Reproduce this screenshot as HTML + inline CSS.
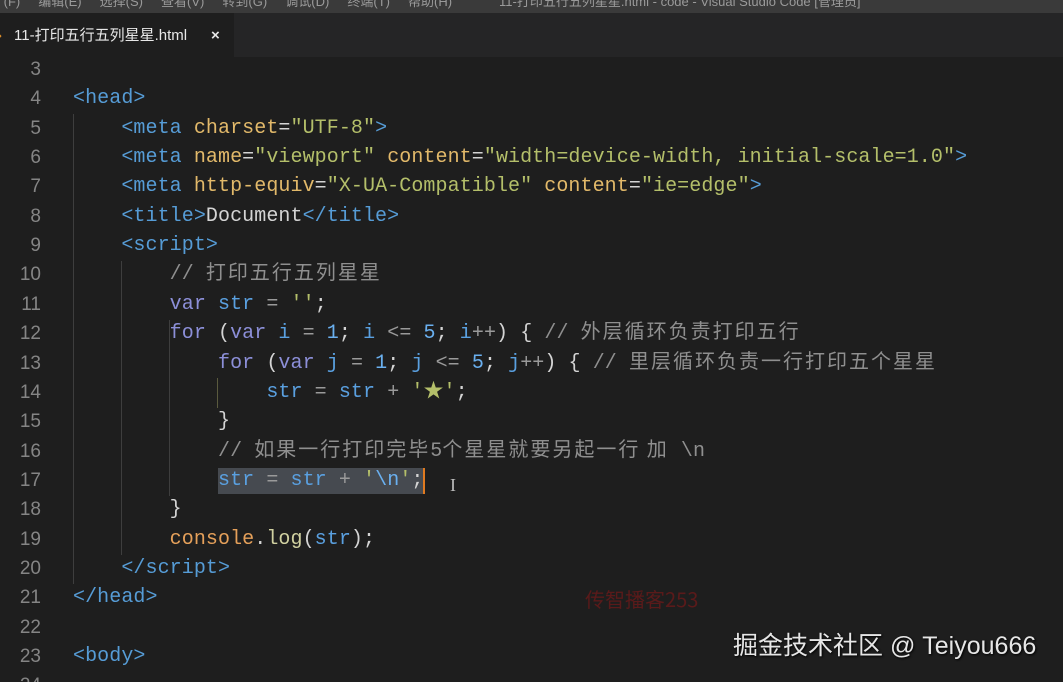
<!DOCTYPE html>
<html><head><meta charset="utf-8"><style>
html,body{margin:0;padding:0;width:1063px;height:682px;overflow:hidden;background:#1e1e1e;position:relative}
.menu{position:absolute;left:0;top:0;width:1063px;height:13px;background:#3a3a3a;overflow:hidden;color:#9a9a9a;font:13px "Liberation Sans","Noto Sans CJK SC",sans-serif;line-height:4px;white-space:nowrap}
.tabbar{position:absolute;left:0;top:13px;width:1063px;height:44px;background:#252526}
.tab{position:absolute;left:0;top:0;width:234px;height:44px;background:#1e1e1e;color:#e8e8e8;font:15px "Liberation Sans","Noto Sans CJK SC",sans-serif;line-height:46px;white-space:nowrap}
.ed{position:absolute;left:0;top:55px;width:1063px}
.ln{position:absolute;left:0;width:41px;text-align:right;color:#858585;font:19px "Liberation Sans",sans-serif;height:29.35px;line-height:29.35px}
.l{position:absolute;left:73px;height:29.35px;font:20px "Liberation Mono","Noto Sans CJK SC",monospace;line-height:29.35px;white-space:pre;color:#d4d4d4;letter-spacing:0.08px}
.t{color:#569cd6}.a{color:#e2b96a}.s{color:#b4bf6a}.k{color:#8c8fd8}.v{color:#5aa0e0}.n{color:#6ab0f0}.c{color:#8f8f8f}.o{color:#9a9a9a}.p{color:#d4d4d4}
.cj{font-family:"Noto Sans CJK SC",sans-serif;letter-spacing:2px;font-size:20px;line-height:1}
.g{position:absolute;width:1px;background:#3e3e3e}
</style></head><body>
<div class="menu">&nbsp;(F)&nbsp;&nbsp;&nbsp;&nbsp;&nbsp;编辑(E)&nbsp;&nbsp;&nbsp;&nbsp;&nbsp;选择(S)&nbsp;&nbsp;&nbsp;&nbsp;&nbsp;查看(V)&nbsp;&nbsp;&nbsp;&nbsp;&nbsp;转到(G)&nbsp;&nbsp;&nbsp;&nbsp;&nbsp;调试(D)&nbsp;&nbsp;&nbsp;&nbsp;&nbsp;终端(T)&nbsp;&nbsp;&nbsp;&nbsp;&nbsp;帮助(H)&nbsp;&nbsp;&nbsp;&nbsp;&nbsp;&nbsp;&nbsp;&nbsp;&nbsp;&nbsp;&nbsp;&nbsp;&nbsp;11-打印五行五列星星.html - code - Visual Studio Code [管理员]</div>
<div class="tabbar"><div class="tab"><span style="color:#e0902a;position:absolute;left:-3px">›</span><span style="position:absolute;left:14px">11-打印五行五列星星.html</span><span style="position:absolute;left:211px;font-weight:bold">×</span></div></div>
<div class="g" style="left:73px;top:114px;height:470px"></div>
<div class="g" style="left:121px;top:261px;height:294px"></div>
<div class="g" style="left:169px;top:320px;height:176px"></div>
<div class="g" style="left:217px;top:378px;height:30px;background:#5a5a3e"></div>
<div class="ed">
<div class="ln" style="top:0">3</div>
<div class="ln" style="top:29.35px">4</div><div class="l" style="top:29.35px"><span class="t">&lt;head&gt;</span></div>
<div class="ln" style="top:58.7px">5</div><div class="l" style="top:58.7px">    <span class="t">&lt;meta</span> <span class="a">charset</span><span class="p">=</span><span class="s">"UTF-8"</span><span class="t">&gt;</span></div>
<div class="ln" style="top:88.05px">6</div><div class="l" style="top:88.05px">    <span class="t">&lt;meta</span> <span class="a">name</span><span class="p">=</span><span class="s">"viewport"</span> <span class="a">content</span><span class="p">=</span><span class="s">"width=device-width, initial-scale=1.0"</span><span class="t">&gt;</span></div>
<div class="ln" style="top:117.4px">7</div><div class="l" style="top:117.4px">    <span class="t">&lt;meta</span> <span class="a">http-equiv</span><span class="p">=</span><span class="s">"X-UA-Compatible"</span> <span class="a">content</span><span class="p">=</span><span class="s">"ie=edge"</span><span class="t">&gt;</span></div>
<div class="ln" style="top:146.75px">8</div><div class="l" style="top:146.75px">    <span class="t">&lt;title&gt;</span>Document<span class="t">&lt;/title&gt;</span></div>
<div class="ln" style="top:176.1px">9</div><div class="l" style="top:176.1px">    <span class="t">&lt;script&gt;</span></div>
<div class="ln" style="top:205.45px">10</div><div class="l" style="top:205.45px">        <span class="c">// <span class="cj">打印五行五列星星</span></span></div>
<div class="ln" style="top:234.8px">11</div><div class="l" style="top:234.8px">        <span class="k">var</span> <span class="v">str</span> <span class="o">=</span> <span class="s">''</span>;</div>
<div class="ln" style="top:264.15px">12</div><div class="l" style="top:264.15px">        <span class="k">for</span> (<span class="k">var</span> <span class="v">i</span> <span class="o">=</span> <span class="n">1</span>; <span class="v">i</span> <span class="o">&lt;=</span> <span class="n">5</span>; <span class="v">i</span><span class="o">++</span>) { <span class="c">// <span class="cj">外层循环负责打印五行</span></span></div>
<div class="ln" style="top:293.5px">13</div><div class="l" style="top:293.5px">            <span class="k">for</span> (<span class="k">var</span> <span class="v">j</span> <span class="o">=</span> <span class="n">1</span>; <span class="v">j</span> <span class="o">&lt;=</span> <span class="n">5</span>; <span class="v">j</span><span class="o">++</span>) { <span class="c">// <span class="cj">里层循环负责一行打印五个星星</span></span></div>
<div class="ln" style="top:322.85px">14</div><div class="l" style="top:322.85px">                <span class="v">str</span> <span class="o">=</span> <span class="v">str</span> <span class="o">+</span> <span class="s">'★'</span>;</div>
<div class="ln" style="top:352.2px">15</div><div class="l" style="top:352.2px">            }</div>
<div class="ln" style="top:381.55px">16</div><div class="l" style="top:381.55px">            <span class="c">// <span class="cj">如果一行打印完毕</span>5<span class="cj">个星星就要另起一行 加</span> \n</span></div>
<div style="position:absolute;left:218px;top:413px;width:205px;height:26px;background:#464a50"></div>
<div style="position:absolute;left:423px;top:413px;width:2px;height:26px;background:#e07a20"></div>
<div class="ln" style="top:410.9px">17</div><div class="l" style="top:410.9px">            <span class="v">str</span> <span class="o">=</span> <span class="v">str</span> <span class="o">+</span> <span class="s">'<span class="n">\n</span>'</span>;</div>
<div style="position:absolute;left:450px;top:420px;color:#bbb;font:18px 'Liberation Serif',serif">I</div>
<div class="ln" style="top:440.25px">18</div><div class="l" style="top:440.25px">        }</div>
<div class="ln" style="top:469.6px">19</div><div class="l" style="top:469.6px">        <span style="color:#e5a05a">console</span>.<span style="color:#d0d0a0">log</span>(<span class="v">str</span>);</div>
<div class="ln" style="top:498.95px">20</div><div class="l" style="top:498.95px">    <span class="t">&lt;/script&gt;</span></div>
<div class="ln" style="top:528.3px">21</div><div class="l" style="top:528.3px"><span class="t">&lt;/head&gt;</span></div>
<div class="ln" style="top:557.65px">22</div>
<div class="ln" style="top:587px">23</div><div class="l" style="top:587px"><span class="t">&lt;body&gt;</span></div>
<div class="ln" style="top:616.35px;height:11px;overflow:hidden">24</div>
</div>
<div style="position:absolute;left:585px;top:584px;color:#5a1a1a;font:20px 'Noto Sans CJK SC',sans-serif">传智播客253</div>
<div style="position:absolute;left:733px;top:626px;color:#e6e6e6;font:25px 'Liberation Sans','Noto Sans CJK SC',sans-serif;text-shadow:1px 1px 2px #000;white-space:nowrap">掘金技术社区 @ Teiyou666</div>
</body></html>
